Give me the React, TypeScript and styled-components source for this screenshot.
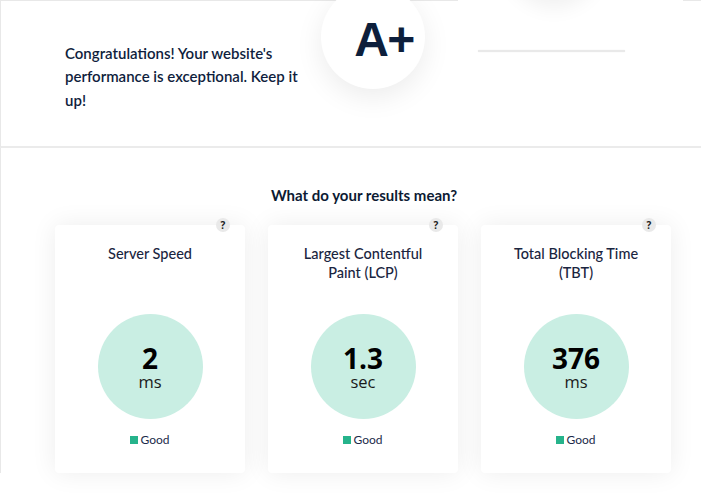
import React from 'react';
import styled, { createGlobalStyle } from 'styled-components';

const GlobalStyle = createGlobalStyle`
  html, body {
    margin: 0;
    padding: 0;
    background: #ffffff;
    overflow: hidden;
  }
  body {
    font-family: Lato, "Open Sans", sans-serif;
    color: #0f1e3d;
  }
`;

const Page = styled.div`
  width: 701px;
  height: 497px;
  overflow: hidden;
`;

const GradePanel = styled.section`
  display: flex;
  align-items: flex-start;
  height: 145px;
  border-top: 1px solid #e8e8e8;
  border-left: 1px solid #e8e8e8;
  border-bottom: 2px solid #ebebeb;
  padding-left: 64px;
`;

const Message = styled.p`
  width: 240px;
  margin: 41px 16px 0 0;
  font-size: 15px;
  font-weight: 600;
  line-height: 23.3px;
  color: #0f1e3d;
`;

const GradeCircle = styled.div`
  flex: none;
  box-sizing: border-box;
  width: 104px;
  height: 104px;
  margin-top: -16px;
  padding: 4px 0 0 22px;
  border-radius: 50%;
  background: #ffffff;
  box-shadow: 0 8px 28px rgba(0, 0, 0, 0.08);
  display: flex;
  align-items: center;
  justify-content: center;
  font-family: "Liberation Sans", Arial, sans-serif;
  font-weight: 700;
  font-size: 48px;
  letter-spacing: -1.5px;
  color: #0d1f3c;
`;

const GaugeColumn = styled.div`
  position: relative;
  width: 225px;
  height: 60px;
  margin: -1px 0 0 33px;
  background: #ffffff;
  display: flex;
  flex-direction: column;
  align-items: flex-start;
`;

const GaugeHead = styled.div`
  width: 92px;
  height: 92px;
  margin: -92px 0 0 50px;
  border-radius: 50%;
  background: #ffffff;
  box-shadow: 0 8px 20px rgba(0, 0, 0, 0.06);
`;

const GaugeTrack = styled.div`
  width: 147px;
  height: 2px;
  margin: 50px 0 0 20px;
  background: #e9e9e9;
  box-shadow: 0 0 2px rgba(0, 0, 0, 0.05);
`;

const ResultsSection = styled.section`
  border-left: 1px solid #e8e8e8;
  padding: 38px 0 0 54px;
`;

const ResultsInner = styled.div`
  width: 618px;
`;

const ResultsTitle = styled.h2`
  margin: 0 0 20px;
  text-align: center;
  font-size: 15px;
  font-weight: 700;
  line-height: 19px;
  color: #0c1a33;
`;

const CardRow = styled.div`
  display: flex;
  gap: 23px;
`;

const Card = styled.div`
  position: relative;
  width: 190px;
  height: 248px;
  box-sizing: border-box;
  padding-top: 19px;
  background: #ffffff;
  border-radius: 4px;
  box-shadow: 0 0 26px rgba(0, 0, 0, 0.075);
  display: flex;
  flex-direction: column;
  align-items: center;
`;

const HelpBadge = styled.span`
  position: absolute;
  top: -7px;
  right: 15px;
  width: 14px;
  height: 14px;
  border-radius: 50%;
  background: #e9e9e9;
  font-family: "Open Sans", sans-serif;
  font-size: 10px;
  font-weight: 700;
  line-height: 14px;
  text-align: center;
  color: #1c1c1c;
`;

const CardTitle = styled.div`
  height: 38px;
  padding: 0 26px;
  text-align: center;
  font-size: 14.5px;
  font-weight: 500;
  line-height: 19px;
  color: #1a2540;
`;

const ScoreCircle = styled.div<{ $tint: string }>`
  width: 105px;
  height: 105px;
  margin-top: 32px;
  border-radius: 50%;
  background: ${(p) => p.$tint};
  display: flex;
  flex-direction: column;
  align-items: center;
  justify-content: center;
`;

const ScoreValue = styled.div`
  font-family: "Open Sans", sans-serif;
  font-size: 28px;
  font-weight: 700;
  line-height: 30px;
  color: #000000;
`;

const ScoreUnit = styled.div`
  font-family: "Open Sans", sans-serif;
  font-size: 16.5px;
  font-weight: 400;
  line-height: 18px;
  color: #1a1a1a;
`;

const Legend = styled.div`
  display: flex;
  align-items: center;
  gap: 2px;
  margin-top: 14px;
  font-size: 12px;
  line-height: 14px;
  color: #1b2a4a;
`;

const LegendSwatch = styled.span<{ $color: string }>`
  width: 8px;
  height: 8px;
  background: ${(p) => p.$color};
`;

type Metric = {
  title: string;
  value: string;
  unit: string;
};

const metrics: Metric[] = [
  { title: 'Server Speed', value: '2', unit: 'ms' },
  { title: 'Largest Contentful Paint (LCP)', value: '1.3', unit: 'sec' },
  { title: 'Total Blocking Time (TBT)', value: '376', unit: 'ms' },
];

const App = () => {
  return (
    <Page>
      <GlobalStyle />
      <GradePanel>
        <Message>
          Congratulations! Your website's performance is exceptional. Keep it up!
        </Message>
        <GradeCircle>A+</GradeCircle>
        <GaugeColumn>
          <GaugeHead />
          <GaugeTrack />
        </GaugeColumn>
      </GradePanel>
      <ResultsSection>
        <ResultsInner>
          <ResultsTitle>What do your results mean?</ResultsTitle>
          <CardRow>
            {metrics.map((m) => (
              <Card key={m.value}>
                <HelpBadge>?</HelpBadge>
                <CardTitle>{m.title}</CardTitle>
                <ScoreCircle $tint="#c9eee3">
                  <ScoreValue>{m.value}</ScoreValue>
                  <ScoreUnit>{m.unit}</ScoreUnit>
                </ScoreCircle>
                <Legend>
                  <LegendSwatch $color="#26b38b" />
                  Good
                </Legend>
              </Card>
            ))}
          </CardRow>
        </ResultsInner>
      </ResultsSection>
    </Page>
  );
};

export default App;
